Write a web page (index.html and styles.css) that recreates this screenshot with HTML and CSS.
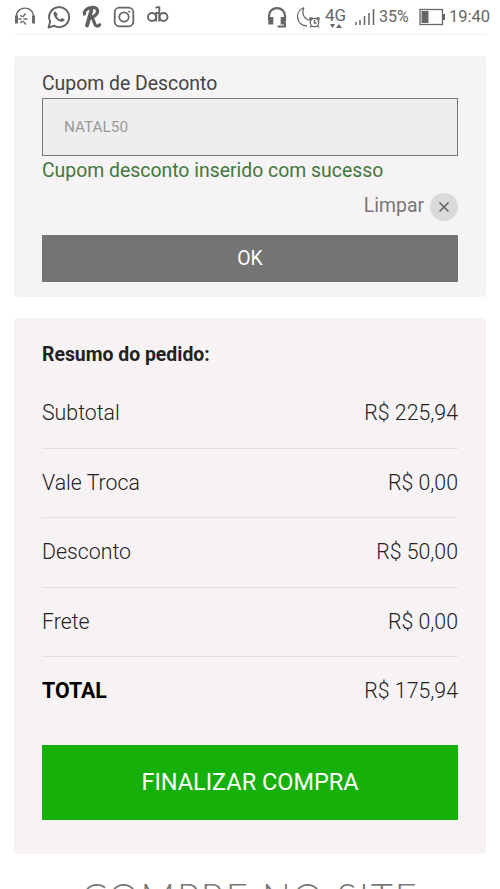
FILE: index.html
```html
<!DOCTYPE html>
<html lang="pt-BR">
<head>
<meta charset="utf-8">
<title>Resumo do pedido</title>
<link rel="stylesheet" href="styles.css">
</head>
<body>
<header class="status">
  <div class="notifications">
    <svg width="22" height="20" viewBox="0 0 22 20" fill="none" stroke="#6b6b6b" stroke-width="1.400"><path d="M2.500 9C2.500-1.500 19.500-1.500 19.500 9"/><path d="M2.500 8.500v8M19.500 8.500v8" stroke-width="3"/><path d="M4.500 12h3M11.500 6.500L8.800 10M8.800 14l3.200 3.500M9.500 12h4M6.500 8l1.500 2M6.500 16l1.500-2" stroke-width="1.400"/></svg>
    <svg width="24" height="24" viewBox="0 0 24 24"><path d="M1.500 22.500l1.700-5.900A10 10 0 1 1 7.200 20.800z" fill="none" stroke="#626262" stroke-width="1.900" stroke-linejoin="round"/><path d="M8.300 6.500c-1.200.2-1.800 1.300-1.600 2.700.6 3.700 4.400 7.300 8 7.600 1.700.1 2.900-1 2.900-2.500l-2.700-1.400-1.500 1.500c-1.700-.6-3-1.900-3.800-3.500L10.800 9.400z" fill="#626262"/></svg>
    <svg width="20" height="24" viewBox="0 0 20 24" fill="none" stroke="#606060" stroke-linecap="round" stroke-linejoin="round"><path d="M9.500 5L5 20.500" stroke-width="3.900"/><path d="M2.500 9C1 3 14 0 15.500 5c.8 4-3.500 7-7 7.500" stroke-width="3.200"/><path d="M10.500 13l2.500 6.500c.8 2 3 2 4.700.3" stroke-width="3.200"/></svg>
    <svg width="22" height="22" viewBox="0 0 22 22" fill="none" stroke="#666" stroke-width="1.8"><rect x="1.700" y="1.700" width="18.600" height="18.600" rx="4.500"/><circle cx="11" cy="11" r="4.700"/><circle cx="16.300" cy="5.700" r=".6" fill="#666" stroke-width="1"/></svg>
    <svg width="24" height="20" viewBox="0 0 24 20" fill="none" stroke="#666" stroke-width="1.900"><circle cx="6" cy="13" r="4"/><circle cx="17.500" cy="13" r="4"/><path d="M10.200 8v9.500M13.300 2.500v15M9.500 4l3.500-1.500M10 9h3.500"/></svg>
  </div>
  <div class="indicators">
    <svg class="headset" width="20" height="24" viewBox="0 0 20 24" fill="none" stroke="#666"><path d="M2 15v-4C2 .5 18 .5 18 11v5" stroke-width="2.200"/><path d="M3.800 12v7.500M16.200 12v7.500" stroke-width="5"/><path d="M18 18v3.500h-7.500" stroke-width="2"/></svg>
    <svg class="moon" width="25" height="24" viewBox="0 0 25 24" fill="none" stroke="#666" stroke-width="1.300"><path d="M8 2.500c-10 4-8 18 3 18.500M8 2.500c-3 6 .5 12.500 6.500 12.500"/><circle cx="18.500" cy="17.500" r="4.200"/><path d="M18.500 15v3h2M14 15.500v-2.500h2.500M20.500 13h2.500v2.500M15.500 21l-1.500 1.500M21.500 21l1.500 1.500"/></svg>
    <span class="network"><span>4G</span><svg width="12" height="5" viewBox="0 0 12 5" fill="#666"><path d="M0 0h5L2.500 4zM9 0l3 4H6z"/></svg></span>
    <svg class="signal" width="20" height="18" viewBox="0 0 20 18" stroke="#666" stroke-width="1.500"><path d="M1 14v3M5 12v5M9.500 8v9M14 5v12M18.500 1v16"/></svg>
    <span class="percent">35%</span>
    <svg class="battery" width="26" height="18" viewBox="0 0 26 18"><rect x="1" y="1.500" width="22.500" height="15" fill="none" stroke="#666" stroke-width="1.300"/><path d="M2.500 3h7v12h-7zM24 6h2v6h-2z" fill="#666"/></svg>
    <span class="clock">19:40</span>
  </div>
</header>
<main>
  <section class="card coupon">
    <label class="coupon-label" for="coupon"><span>Cupom de Desconto</span></label>
    <input id="coupon" class="coupon-input" type="text" value="NATAL50">
    <p class="success"><span>Cupom desconto inserido com sucesso</span></p>
    <div class="clear"><span>Limpar</span><button class="clear-button" aria-label="Limpar"><svg width="28" height="28" viewBox="0 0 28 28" stroke="#686868" stroke-width="1.700"><path d="M9.500 9.500l9 9M18.500 9.500l-9 9"/></svg></button></div>
    <button class="ok">OK</button>
  </section>
  <section class="card summary">
    <h2><span>Resumo do pedido:</span></h2>
    <dl>
      <div class="row"><dt>Subtotal</dt><dd>R$ 225,94</dd></div>
      <div class="row"><dt>Vale Troca</dt><dd>R$ 0,00</dd></div>
      <div class="row"><dt>Desconto</dt><dd>R$ 50,00</dd></div>
      <div class="row"><dt>Frete</dt><dd>R$ 0,00</dd></div>
      <div class="row total"><dt>TOTAL</dt><dd>R$ 175,94</dd></div>
    </dl>
    <button class="checkout"><span>FINALIZAR COMPRA</span></button>
  </section>
</main>
<footer><span>COMPRE NO SITE</span></footer>
</body>
</html>
```
FILE: styles.css
```css
* { box-sizing: border-box; }
html { height: 100%; overflow: hidden; }
body { margin: 0; height: 889px; overflow: hidden; background: #fff; font-family: Roboto, sans-serif; color: #333; }
button { border: 0; padding: 0; font-family: inherit; cursor: pointer; }
svg { display: block; flex: none; }
.status { display: flex; justify-content: space-between; height: 35px; margin: 0 14px; border-bottom: 1px solid #f1f1f1; color: #666; }
.notifications { display: flex; align-items: center; height: 33px; gap: 11px; }
.notifications svg:last-child { margin-top: -6px; }
.indicators { display: flex; align-items: center; height: 33px; margin-right: -4px; font-size: 17px; white-space: nowrap; }
.headset { margin-right: 9px; }
.moon { margin-right: 4px; }
.network { display: flex; flex-direction: column; align-items: center; width: 21px; font-size: 17px; line-height: 17px; margin-right: 9px; padding-top: 2px; }
.signal { margin-right: 4px; }
.percent { width: 31px; margin-right: 9px; font-size: 16px; }
.battery { margin-right: 4px; }
.clock { width: 41px; font-size: 16.500px; }
.card { margin: 0 14px; padding: 0 28px; border-radius: 3px; background: #f6f3f4; }
.coupon { margin-top: 21px; height: 241px; padding-top: 15px; }
.coupon-label { display: block; height: 27px; line-height: 25px; font-size: 19.400px; color: #444; white-space: nowrap; }
.coupon-input { display: block; width: 100%; height: 58px; padding: 0 21px; border: 1px solid #777; border-radius: 0; background: #eee; color: #999; font: 15.300px Roboto, sans-serif; outline: 0; }
.success { margin: 0; height: 37px; line-height: 29px; font-size: 19.400px; color: #42773f; white-space: nowrap; }
.clear { display: flex; justify-content: flex-end; gap: 6px; height: 42px; line-height: 25px; font-size: 19.400px; color: #777; }
.clear-button { width: 28px; height: 28px; border-radius: 50%; background: #dadada; }
.ok { display: block; width: 100%; height: 47px; background: #747474; color: #fff; font-size: 19.400px; padding-bottom: 1px; }
.summary { margin-top: 21px; height: 536px; padding-top: 22px; background: #f7f3f4; }
h2 { margin: 0; height: 39px; line-height: 29px; font-size: 19.400px; font-weight: 700; color: #222; white-space: nowrap; }
dl { margin: 0 0 18px; }
.row { display: flex; justify-content: space-between; height: 69.500px; line-height: 67px; border-bottom: 1px solid #e1dfe0; font-size: 21.300px; font-weight: 300; color: #222; }
dd { margin: 0; }
.total { border-bottom: 0; }
.total dt { color: #000; font-weight: 700; }
.checkout { display: block; width: 100%; height: 75px; background: #15b00a; color: #fff; font-size: 23.500px; }
footer { margin-top: 12px; font: 300 38px/60px Lato, sans-serif; letter-spacing: 1.900px; text-align: center; color: #777; white-space: nowrap; }
```
